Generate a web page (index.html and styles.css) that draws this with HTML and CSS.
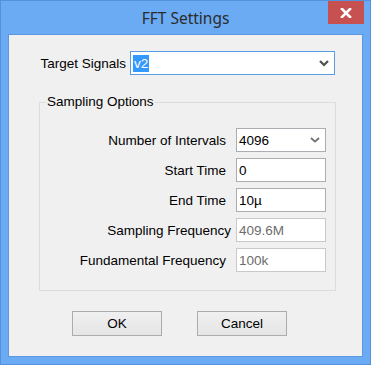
FILE: index.html
```html
<!DOCTYPE html>
<html>
<head>
<meta charset="utf-8">
<link rel="stylesheet" href="styles.css">
</head>
<body>
<div class="window">
  <div class="titlebar">
    <div class="title">FFT Settings</div>
    <div class="close">
      <svg width="12" height="10" viewBox="0 0 12 10"><path d="M2 1 L10 9 M10 1 L2 9" stroke="#fff" stroke-width="2.6" stroke-linecap="square"/></svg>
    </div>
  </div>
  <div class="client">
    <div class="target-row">
      <span class="label target-label">Target Signals</span>
      <div class="combo combo-focus">
        <span class="sel">v2</span>
        <svg class="chev" width="10" height="7" viewBox="0 0 10 7"><polyline points="1,1 5,5 9,1" fill="none" stroke="#505050" stroke-width="2.2"/></svg>
      </div>
    </div>
    <fieldset class="group">
      <legend>Sampling Options</legend>
      <div class="grid">
        <span class="label">Number of Intervals</span>
        <div class="combo">
          <span class="val">4096</span>
          <svg class="chev" width="10" height="6" viewBox="0 0 10 6"><polyline points="1,1 5,4.6 9,1" fill="none" stroke="#707070" stroke-width="1.8"/></svg>
        </div>
        <span class="label">Start Time</span>
        <div class="field"><span class="val">0</span></div>
        <span class="label">End Time</span>
        <div class="field"><span class="val">10µ</span></div>
        <span class="label label-wide">Sampling Frequency</span>
        <div class="field disabled"><span class="val">409.6M</span></div>
        <span class="label">Fundamental Frequency</span>
        <div class="field disabled"><span class="val">100k</span></div>
      </div>
    </fieldset>
    <div class="buttons">
      <div class="btn">OK</div>
      <div class="btn">Cancel</div>
    </div>
  </div>
</div>
</body>
</html>
```
FILE: styles.css
```css
html, body {
  margin: 0;
  padding: 0;
}
body {
  font-family: "Liberation Sans", Arial, sans-serif;
  font-size: 13.5px;
  color: #000;
}
.window {
  width: 371px;
  height: 365px;
  box-sizing: border-box;
  background: #6aabf4;
  border: 1px solid #5592dc;
  padding: 0 7px 7px 7px;
  display: flex;
  flex-direction: column;
}
.titlebar {
  height: 33px;
  display: grid;
  grid-template-columns: 1fr auto 1fr;
  align-items: start;
  margin: 0 -7px 0 -7px;
}
.title {
  grid-column: 2;
  font-family: "Noto Sans", "Open Sans", sans-serif;
  font-size: 15.5px;
  color: #2c2c2c;
  line-height: 33px;
  margin-top: 1px;
}
.close {
  grid-column: 3;
  justify-self: end;
  width: 36px;
  height: 23px;
  background: #c75050;
  margin-right: 6px;
  display: flex;
  align-items: center;
  justify-content: center;
}
.client {
  flex: 1;
  background: #f0f0f0;
  border: 1px solid #5b98e0;
  display: flex;
  flex-direction: column;
}
.target-row {
  display: flex;
  align-items: center;
  margin-top: 16px;
}
.label {
  white-space: nowrap;
  text-align: right;
}
.target-label {
  width: 117px;
  margin-right: 4px;
}
.combo, .field {
  box-sizing: border-box;
  height: 24px;
  background: #fff;
  border: 1px solid #abadb3;
  display: flex;
  align-items: center;
  padding-left: 2px;
}
.combo-focus {
  width: 205px;
  border-color: #569de5;
  padding-left: 2px;
}
.combo .chev {
  margin-left: auto;
  margin-right: 5px;
}
.sel {
  background: #3399ff;
  color: #fff;
  height: 17px;
  line-height: 17px;
  padding: 0 1px;
}
.group {
  margin: 19px 26px 0 30px;
  padding: 0 0 18px 0;
  border: 1px solid #dcdcdc;
  min-width: 0;
}
.group legend {
  padding: 0 1px;
  margin-left: 6px;
  line-height: 16px;
}
.grid {
  display: grid;
  grid-template-columns: 186px 90px;
  column-gap: 10px;
  row-gap: 6px;
  align-items: center;
  margin-top: 18px;
}
.label-wide {
  margin-right: -5px;
}
.field.disabled {
  border-color: #c9c9c9;
  color: #6d6d6d;
}
.buttons {
  display: flex;
  gap: 35px;
  margin: 20px 0 0 63px;
}
.btn {
  box-sizing: border-box;
  width: 90px;
  height: 25px;
  border: 1px solid #acacac;
  background: linear-gradient(#f0f0f0, #e5e5e5);
  display: flex;
  align-items: center;
  justify-content: center;
}
```
